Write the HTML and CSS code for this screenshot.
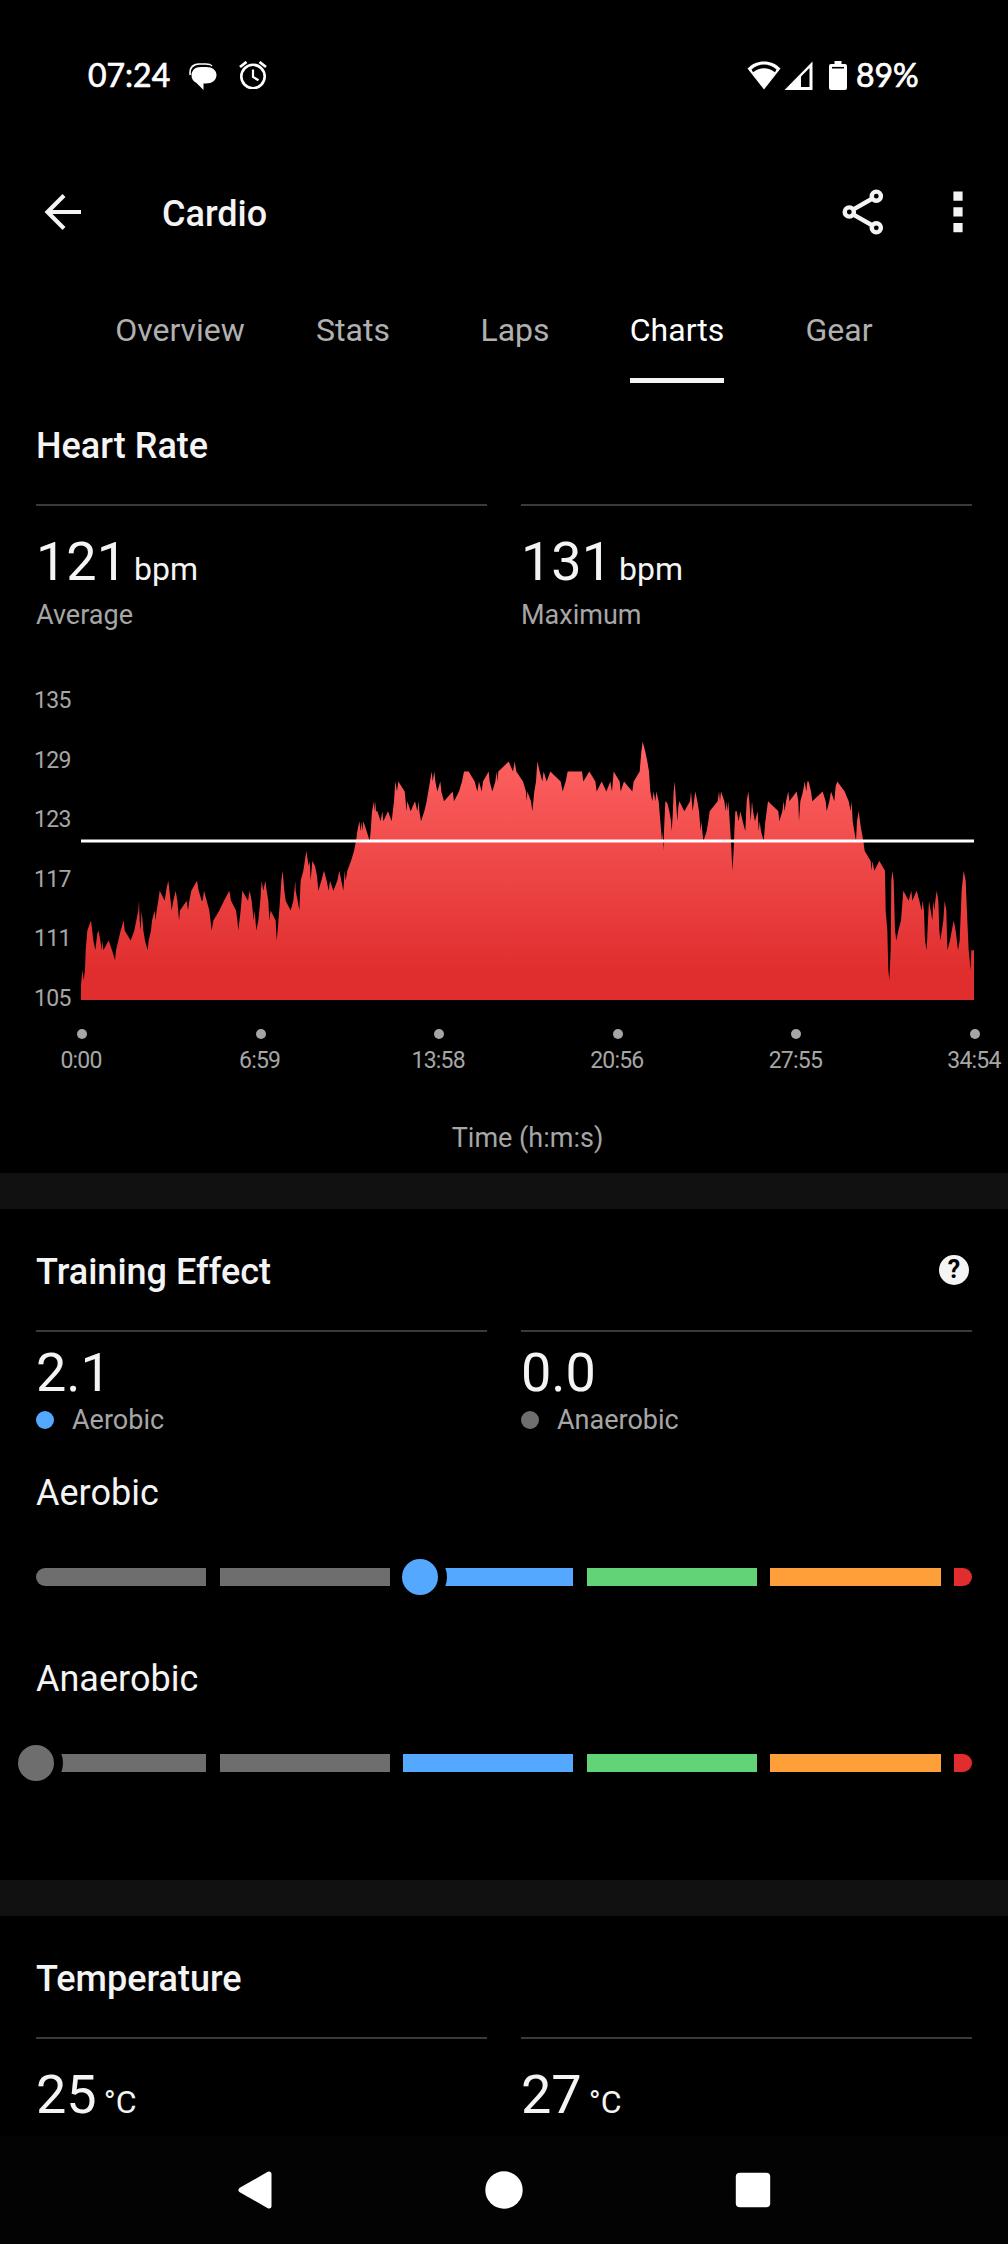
FILE: index.html
```html
<!DOCTYPE html>
<html lang="en">
<head>
  <meta charset="UTF-8" />
  <title>Cardio</title>
  <link rel="stylesheet" href="styles.css">
</head>
<body>
  <div class="status-bar">
    <span class="clock">07:24</span>
    <svg class="icon-chat" width="28" height="28" viewBox="0 0 28 28">
      <path d="M1.200 12C0 5 4 1 10 1H17C20 1 22 2 23 3" fill="none" stroke="#fff" stroke-width="1.600" />
      <path d="M12 4H17C23.500 4 27.500 7.500 27.500 12C27.500 17 23 20.500 17 20.500H14.500V27L7.500 20C4 18.500 2.500 15.500 2.500 12C2.500 7.500 6 4 12 4Z" fill="#fff" />
      <path d="M2.500 9.500C3.500 5 6.500 3 11 3H22" fill="none" stroke="#000" stroke-width="0.800" />
    </svg>
    <svg class="icon-alarm" width="28" height="28" viewBox="0 0 28 28">
      <g fill="none" stroke="#fff">
        <circle cx="14" cy="15.500" r="11.700" stroke-width="2.600" />
        <path d="M14 8.500V16L19.500 19.300" stroke-width="2.200" />
        <path d="M1 6L7.500 1M27 6L20.500 1" stroke-width="2.800" />
      </g>
    </svg>
    <svg class="icon-wifi" width="34" height="29" viewBox="0 0 34 29">
      <path d="M17 0.500C23.500 0.500 29 3 33.500 7.500L17 28.500L0.500 7.500C5 3 10.500 0.500 17 0.500Z" fill="#fff" />
      <path d="M4.500 8.500C12 1.800 22 1.800 29.500 8.500L28 11.200C21 5.800 13 5.800 6 11.200Z" fill="#000" />
    </svg>
    <svg class="icon-cell" width="29" height="29" viewBox="0 0 29 29">
      <path d="M28.500 0.500V29H0.500Z" fill="#fff" />
      <path d="M17 15.500L25.500 7V26H17Z" fill="#000" />
    </svg>
    <svg class="icon-battery" width="18" height="29" viewBox="0 0 18 29">
      <path d="M5.500 0H12.500V3H16Q18 3 18 5V27Q18 29 16 29H2Q0 29 0 27V5Q0 3 2 3H5.500Z" fill="#fff" />
      <path d="M3 6.700H15" stroke="#000" stroke-width="1.600" />
    </svg>
    <span class="battery">89%</span>
  </div>

  <div class="app-bar">
    <svg width="38" height="38" viewBox="0 0 38 38">
      <path d="M37 19H4M20 2.500L3.500 19L20 35.500" fill="none" stroke="#f4f4f4" stroke-width="4.200" />
    </svg>
    <h1>Cardio</h1>
    <svg class="icon-share" width="42" height="48" viewBox="0 0 42 48">
      <g fill="none" stroke="#f4f4f4" stroke-width="4.400">
        <circle cx="34.300" cy="8.200" r="4.600" />
        <circle cx="7.300" cy="24" r="4.600" />
        <circle cx="34.300" cy="39.800" r="4.600" />
        <path d="M11 21.700L30.500 10.500M11 26.300L30.500 37.500" />
      </g>
    </svg>
    <svg class="icon-more" width="10" height="42" viewBox="0 0 10 42">
      <path d="M0.400 0.500H9.600V9.800H0.400ZM0.400 16.300H9.600V25.600H0.400ZM0.400 32H9.600V41.300H0.400Z" fill="#f4f4f4" />
    </svg>
  </div>

  <div class="tabs">
    <a class="tab wide"><span>Overview</span></a>
    <a class="tab"><span>Stats</span></a>
    <a class="tab"><span>Laps</span></a>
    <a class="tab active"><span>Charts</span></a>
    <a class="tab"><span>Gear</span></a>
  </div>

  <div class="section heart">
    <h2>Heart Rate</h2>
    <div class="stats">
      <div class="stat">
        <div class="value">121<small>bpm</small></div>
        <div class="label">Average</div>
      </div>
      <div class="stat">
        <div class="value">131<small>bpm</small></div>
        <div class="label">Maximum</div>
      </div>
    </div>

    <div class="chart">
      <div class="y-axis">
        <span>135</span>
        <span>129</span>
        <span>123</span>
        <span>117</span>
        <span>111</span>
        <span>105</span>
      </div>
      <div class="plot">
        <!-- y runs from 105 to 135 bpm, flipped so it grows upwards -->
        <svg class="area" viewBox="0 105 2679 30" preserveAspectRatio="none">
          <defs>
            <linearGradient id="hr" gradientUnits="userSpaceOnUse" x1="0" y1="107.500" x2="0" y2="131">
              <stop offset="0" stop-color="#e02d2d" />
              <stop offset="1" stop-color="#ff6464" />
            </linearGradient>
          </defs>
          <g transform="matrix(1 0 0 -1 0 240)">
            <polygon fill="url(#hr)" points="
              0,105 0,106.5 4,108 8,107 12,108 14,110 19,112 30,113 37,111 43,110 49,111.7 52,112 58,111 62,110 64,111 67,110
              83,111 93,110 102,109 105,110 112,111 119,112 128,113 131,112 149,111 160,112 166,113 172,114 174,115 176,113 179,112 182,114
              187,112 192,111 200,110 203,111 210,112 213,113 221,114 223,113 227,114 232,115 236,116 251,115 257,116.3 262,117 267,115.5 272,114
              277,115 284,116 289,115 294,113 297,114 317,115 321,114 325,115 331,116 348,117 353,116 362,115 365,115 369,116 377,115
              385,114 392,112 397,113 415,114 429,115 445,116 450,115 465,114 469,113 472,112 479,114 484,116 501,115 506,116 512,115
              518,113 521,114 526,112 532,113 538,115 542,117 547,116 553,117 557,116 562,115 565,113 569,114 584,113 587,111 590,112
              597,115 601,117 605,118 610,116 614,115 629,114 637,115 643,117 644,116 650,115 655,114 659,117 667,118 676,120 683,118.5
              686,119 689,117 694,119 702,118.5 708,117.5 712,116 721,117 729,118 737,117 743,116 747,117 757,116 769,117 775,118 781,117
              787,116 791,118 794,117 799,118 810,119 819,120 825,121 829,122 835,123 839,122 842,123 844,122 847,123 857,122 866,121
              869,122 873,124 879,125 881,124 883,125 885,124 889,124 899,123 904,124 907,123 921,124 932,123 939,125 943,127 948,126
              952,127 971,126 974,125 976,124 979,125 989,124 1002,125 1009,124 1013,125 1015,124 1020,123 1030,124 1037,125 1047,127 1052,128
              1055,127 1060,128 1063,127 1069,126 1078,127 1081,126 1089,125 1115,126 1119,125 1134,126 1143,127 1149,128 1163,128 1181,127 1189,126
              1194,127 1202,126 1206,127 1223,128 1226,127 1234,126 1243,127 1247,128 1249,127 1252,128 1283,129 1296,128 1301,129 1306,128 1326,127
              1335,126 1337,125 1339,126 1350,125 1354,124 1360,126 1365,127 1369,129 1376,128 1384,127 1388,128 1397,127 1408,128 1439,127 1445,126
              1454,127 1460,128 1503,128 1507,127 1525,128 1543,127 1547,126 1562,127 1576,126 1588,127 1593,126 1598,128 1616,127 1619,126 1629,127
              1654,126 1658,127 1676,128 1681,130 1685,131 1693,130 1699,129 1704,128 1708,126 1714,125 1718,126 1723,125 1726,126 1733,125 1738,123
              1743,121 1745,122 1748,120 1749,122 1753,125 1759,124.8 1765,124 1770,123 1772,122 1775,123.5 1778,126 1781,127 1785,125 1789,123 1792,124.5
              1795,125 1810,124 1827,125 1830,126 1835,124 1839,125 1843,126 1849,125 1854,124 1859,122 1861,123 1864,122 1867,121 1877,122
              1882,123 1886,124 1910,125 1914,126 1917,125 1920,126 1930,125 1934,124 1937,125 1939,124 1942,125 1946,123 1950,121 1954,118
              1958,120 1960,122 1963,124 1967,124 1973,123 1978,124 1985,123 1993,122 1997,125 2002,126 2005,125 2009,123 2013,125 2016,124
              2022,123 2030,124 2033,122 2036,123 2040,122 2048,121 2053,123 2061,125 2092,124 2095,123 2104,124 2108,125 2111,124 2115,125
              2122,126 2125,125 2147,126 2152,125 2154,123 2158,125 2166,126 2171,127 2176,126 2179,127 2183,127 2190,126 2194,125 2225,126
              2234,125 2237,124 2245,125 2250,126 2260,125 2264,126.5 2269,127 2291,126 2303,125 2309,124 2312,125 2315,123 2320,122 2325,121
              2328,123 2333,124 2339,122.5 2347,121 2351,120 2369,119 2372,118 2374,119 2380,118 2395,119 2412,118 2414,114 2419,112 2422,108
              2425,107 2429,110 2431,117 2434,118 2438,117 2442,112 2446,111 2452,112 2460,113 2467,116 2483,115 2491,116 2494,115 2507,116
              2515,115 2522,114 2525,115 2529,114 2532,111 2537,110 2541,113 2544,115 2549,114 2554,113 2557,115 2560,114 2563,115 2567,116
              2572,115 2575,112 2578,111 2587,113 2591,115 2596,114 2599,110 2607,111 2618,113 2624,112 2631,110 2636,111 2642,116 2648,118
              2654,117 2659,113 2663,110 2669,108 2671,110 2679,110 2679,105" />
            <path class="average" d="M0 121H2679" />
          </g>
        </svg>
        <div class="x-axis">
          <span>0:00</span>
          <span>6:59</span>
          <span>13:58</span>
          <span>20:56</span>
          <span>27:55</span>
          <span>34:54</span>
        </div>
        <div class="axis-title">Time (h:m:s)</div>
      </div>
    </div>
  </div>

  <div class="section training">
    <div class="section-head">
      <h2>Training Effect</h2>
      <span class="help">?</span>
    </div>
    <div class="stats">
      <div class="stat">
        <div class="value">2.1</div>
        <div class="label"><i class="dot blue"></i>Aerobic</div>
      </div>
      <div class="stat">
        <div class="value">0.0</div>
        <div class="label"><i class="dot gray"></i>Anaerobic</div>
      </div>
    </div>

    <div class="gauge">
      <h3>Aerobic</h3>
      <div class="track">
        <i class="gray"></i><i class="gray"></i><i class="blue"></i><i class="green"></i><i class="orange"></i><i class="red"></i>
        <b class="thumb blue" style="left: 41%"></b>
      </div>
    </div>
    <div class="gauge">
      <h3>Anaerobic</h3>
      <div class="track">
        <i class="gray"></i><i class="gray"></i><i class="blue"></i><i class="green"></i><i class="orange"></i><i class="red"></i>
        <b class="thumb gray" style="left: 0%"></b>
      </div>
    </div>
  </div>

  <div class="section temperature">
    <h2>Temperature</h2>
    <div class="stats">
      <div class="stat">
        <div class="value">25<small>°C</small></div>
      </div>
      <div class="stat">
        <div class="value">27<small>°C</small></div>
      </div>
    </div>
  </div>

  <div class="nav-bar">
    <svg width="38" height="38" viewBox="0 0 38 38">
      <path d="M33 3V35L5 19Z" fill="#fff" stroke="#fff" stroke-width="5" stroke-linejoin="round" />
    </svg>
    <svg width="38" height="38" viewBox="0 0 38 38">
      <circle cx="19" cy="19" r="18.700" fill="#fff" />
    </svg>
    <svg width="38" height="38" viewBox="0 0 38 38">
      <rect x="1.800" y="1.800" width="34.400" height="34.400" rx="4" fill="#fff" />
    </svg>
  </div>
</body>
</html>
```
FILE: styles.css
```css
* {
  box-sizing: border-box;
}
body {
  margin: 0;
  width: 1008px;
  height: 2244px;
  overflow: hidden;
  background: #000;
  color: #f4f4f4;
  font-family: Roboto, sans-serif;
}
h1, h2, h3 {
  margin: 0;
  font-size: 36px;
  line-height: 44px;
  font-weight: 500;
}
svg {
  display: block;
  flex: none;
}

/* top bars */
.status-bar {
  display: flex;
  align-items: center;
  height: 150px;
  padding: 0 89px 0 88px;
  color: #fff;
  font-family: Lato, sans-serif;
  font-size: 32px;
  -webkit-text-stroke: 0.7px #fff;
}
.clock, .battery {
  margin-top: -2px;
}
.clock {
  width: 101px;
}
.icon-chat {
  margin-top: 4px;
}
.icon-alarm {
  margin-left: 22px;
}
.icon-wifi {
  margin-left: auto;
}
.icon-cell {
  margin-left: 3px;
}
.icon-battery {
  margin: 0 9px 0 16px;
}
.battery {
  width: 63px;
  white-space: nowrap;
}
.app-bar {
  display: flex;
  align-items: center;
  height: 124px;
  padding: 0 45px 0 44px;
}
.app-bar h1 {
  margin-left: 80px;
  padding-top: 3px;
}
.icon-share {
  margin-left: auto;
}
.icon-more {
  margin-left: 69px;
}
.tabs {
  display: flex;
  padding-left: 88px;
  height: 109px;
}
.tab {
  display: flex;
  justify-content: center;
  width: 162px;
  color: #b0b0b0;
  font-size: 32px;
  line-height: 40px;
}
.tab.wide {
  width: 184px;
}
.tab span {
  padding-top: 36px;
}
.tab.active {
  color: #fff;
}
.tab.active span {
  border-bottom: 5px solid #f4f4f4;
}

/* sections */
.section {
  padding: 41px 36px 0;
}
.section-head {
  display: flex;
  justify-content: space-between;
}
.training, .temperature {
  border-top: 36px solid #111;
}
.stats {
  display: grid;
  grid-template-columns: 1fr 1fr;
  gap: 34px;
  margin-top: 36px;
}
.stat {
  border-top: 2px solid #3a3a3a;
  padding-top: 24px;
}
.value {
  font-size: 54px;
  line-height: 64px;
  height: 64px;
}
.value small {
  font-size: 32px;
  margin-left: 7px;
}
.label {
  display: flex;
  align-items: center;
  margin-top: 5px;
  color: #a6a6a6;
  font-size: 27px;
  line-height: 32px;
}

/* heart rate chart */
.heart {
  padding-bottom: 19px;
}
.chart {
  display: grid;
  grid-template-columns: 47px 893px;
  margin: 57px 0 0 -2px;
  color: #a6a6a6;
}
.y-axis {
  display: flex;
  flex-direction: column;
  justify-content: space-between;
  height: 322px;
  padding-top: 1px;
  margin-bottom: -1px;
  font-size: 23px;
  line-height: 24px;
  letter-spacing: -0.7px;
}
.y-axis span {
  margin-bottom: -1px;
}
.plot {
  padding-top: 14px;
}
.area {
  width: 893px;
  height: 298px;
}
.average {
  stroke: #fff;
  stroke-width: 3px;
  vector-effect: non-scaling-stroke;
}
.x-axis {
  display: flex;
  justify-content: space-between;
  margin: 29px -35px 0;
}
.x-axis span {
  width: 70px;
  font-size: 23px;
  line-height: 28px;
  letter-spacing: -0.8px;
  text-align: center;
}
.x-axis span::before {
  content: "";
  display: block;
  width: 10px;
  height: 10px;
  margin: 0 0 8px 31px;
  border-radius: 50%;
  background: #a6a6a6;
}
.axis-title {
  margin-top: 47px;
  font-size: 27px;
  line-height: 32px;
  text-align: center;
}

/* training effect */
.help {
  width: 30px;
  height: 30px;
  margin: 5px 3px 0 0;
  border-radius: 50%;
  background: #f4f4f4;
  color: #000;
  font-size: 25px;
  font-weight: 700;
  line-height: 30px;
  text-align: center;
}
.training {
  padding-bottom: 72px;
}
.training .stat {
  padding-top: 10px;
}
.training .value {
  line-height: 62px;
  height: 62px;
}
.training .label {
  margin-top: 0;
}
.dot {
  width: 18px;
  height: 18px;
  margin-right: 18px;
  border-radius: 50%;
}
.gauge {
  padding: 35px 0 36px;
}
.gauge h3 {
  font-weight: 400;
}
.track {
  position: relative;
  display: flex;
  gap: 13.4px;
  height: 18px;
  margin-top: 53px;
}
.track i {
  flex: 1;
}
.track i:first-child {
  border-radius: 9px 0 0 9px;
}
.track i.red {
  flex: 0 0 18px;
  border-radius: 0 9px 9px 0;
}
.thumb {
  position: absolute;
  top: -9px;
  width: 36px;
  height: 36px;
  margin-left: -18px;
  border-radius: 50%;
  box-shadow: 0 0 0 9px #000;
}
.gray {
  background: #6e6e6e;
}
.blue {
  background: #54a8ff;
}
.green {
  background: #62d478;
}
.orange {
  background: #ff9f3a;
}
.red {
  background: #e12d2d;
}

/* android navigation */
.temperature {
  height: 256px;
}
.nav-bar {
  display: flex;
  justify-content: center;
  align-items: center;
  gap: 211px;
  height: 108px;
  padding-right: 1px;
  background: #030303;
}
```
